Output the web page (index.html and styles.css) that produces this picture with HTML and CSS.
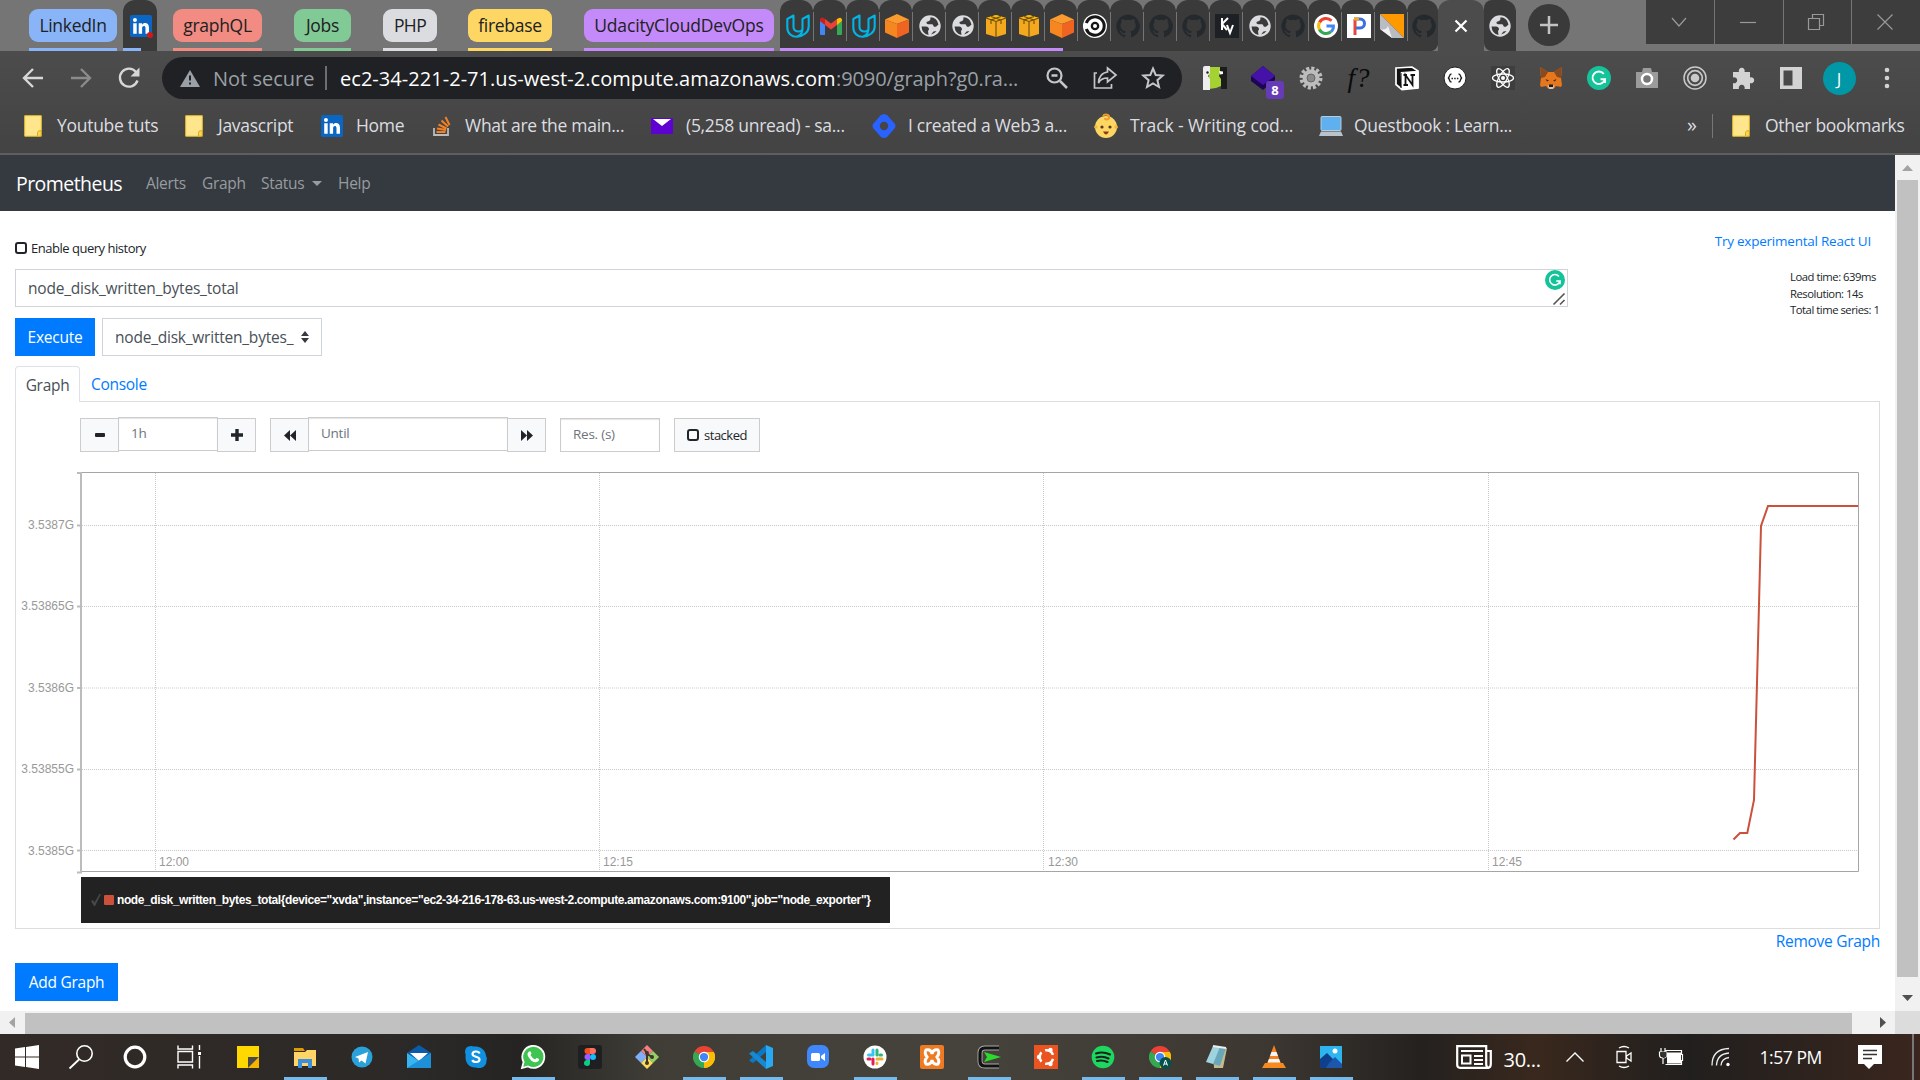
FILE: index.html
```html
<!DOCTYPE html>
<html lang="en">
<head>
<meta charset="utf-8">
<title>Prometheus Time Series Collection and Processing Server</title>
<link rel="stylesheet" href="styles.css">
</head>
<body>
<svg class="defs" aria-hidden="true">
  <symbol id="globe" viewBox="0 0 24 24"><circle cx="12" cy="12" r="10.700" fill="#dadce0"/><path d="M3.500 12.500h4.500q3 .3 3 3l-1 1.500.5 4Q4 19.500 3.500 12.500z" fill="#3a3a3a"/><path d="M12.500 3.300q6.500.2 8 7.200l-2.500 2.300h-2l-1.500-2.500h-4.500q-2-.2-1.500-2.300l2.500-1q1.800-1 1.500-3.700z" fill="#3a3a3a"/><path d="M13 20.500q3.500-.5 5.500-3.500l-3 .5z" fill="#3a3a3a"/></symbol>
  <symbol id="udacity" viewBox="0 0 24 24"><path d="M7.500 1.500L1.300 5v8.500c0 6 4.700 9.500 9.700 9.200 6.500-.5 11.700-4.500 11.700-10.200V1.500L16.500 5v9.500c0 4.500-9 4-9-1.500zM11 22.500c3.500-1 5.500-4 5.500-8" fill="none" stroke="#02b3e4" stroke-width="2.100" stroke-linejoin="round"/></symbol>
  <symbol id="gmail" viewBox="0 0 24 24"><path d="M1 7v13q0 1 1 1h4V10z" fill="#4285f4"/><path d="M18 10v11h4q1 0 1-1V7z" fill="#34a853"/><path d="M18 5v6l5-4V5.500q-1-3-4-1z" fill="#fbbc04"/><path d="M6 5v6l6 4.500 6-4.500V5l-6 4.500z" fill="#ea4335"/><path d="M1 5.500V7l5 4V5Q2 2 1 5.500z" fill="#c5221f"/></symbol>
  <symbol id="cube" viewBox="0 0 24 24"><path d="M12 0 24 5.500 12 10 0 5.500z" fill="#fb9a2e"/><path d="M0 5.500 12 10v14L0 18.500z" fill="#f6861f"/><path d="M24 5.500 12 10v14l12-5.500z" fill="#ee6420"/></symbol>
  <symbol id="box" viewBox="0 0 24 24"><path d="M12 1l10 3v16l-10 3L2 20V4z" fill="#f3a81e"/><path d="M12 1 22 4 12 7 2 4z" fill="#fbb900"/><path d="M2 4l10 3.500L22 4M12 8v15M7 2.500l10 3.500M17 2.500L7 6v4M17 6v4" fill="none" stroke="#6b4a12" stroke-width="1.100"/></symbol>
  <symbol id="circleci" viewBox="0 0 24 24"><circle cx="12" cy="12" r="12" fill="#fff"/><path d="M3.300 9a9.200 9.200 0 1 1 0 6" fill="none" stroke="#161616" stroke-width="3"/><path d="M0 12h9" stroke="#fff" stroke-width="3"/><circle cx="12" cy="12" r="4.300" fill="#161616"/><circle cx="12" cy="12" r="2" fill="#fff"/></symbol>
  <symbol id="github" viewBox="0 0 24 24"><path d="M12 .5a11.700 11.700 0 0 0-3.700 22.800c.6.100.8-.3.8-.6v-2.200c-3.300.7-4-1.400-4-1.400-.5-1.400-1.300-1.800-1.300-1.800-1.100-.7.100-.7.100-.7 1.200.1 1.800 1.200 1.800 1.200 1.100 1.800 2.800 1.300 3.500 1 .1-.8.400-1.300.8-1.600-2.700-.3-5.500-1.300-5.500-5.900 0-1.300.5-2.300 1.200-3.200-.1-.3-.5-1.500.1-3.100 0 0 1-.3 3.300 1.200a11 11 0 0 1 6 0c2.300-1.500 3.300-1.200 3.300-1.200.6 1.600.2 2.800.1 3.100.8.900 1.200 1.900 1.200 3.200 0 4.600-2.800 5.600-5.500 5.900.4.400.8 1.100.8 2.200v3.300c0 .3.200.7.800.6A11.700 11.700 0 0 0 12 .5z" fill="#24292e"/></symbol>
  <symbol id="linkedin" viewBox="0 0 24 24"><rect width="24" height="24" rx="2" fill="#0a66c2"/><path d="M3.500 9h3.800v11.500H3.500zM9.500 9h3.600v1.600c1.700-3 7.600-2.500 7.600 2.900v7h-3.800v-6.300c0-3.200-3.700-2.800-3.700 0v6.300H9.500z" fill="#fff"/><circle cx="5.400" cy="5.400" r="2.200" fill="#fff"/></symbol>
  <symbol id="folder" viewBox="0 0 18 22"><path d="M.7.700h16.600v15l-2 .3v5.200H.7z" fill="#ffe68c" stroke="#e9bf2c"/><path d="M13.500 21.300v-3.500q0-2 2-2h1.800v5.500z" fill="#fbd656" stroke="#d9ac20"/></symbol>
  <symbol id="chrome" viewBox="0 0 24 24"><path d="M12 12 1.600 6A12 12 0 0 1 22.400 6z" fill="#ea4335"/><path d="M12 12 22.400 6A12 12 0 0 1 12 24z" fill="#fbbc05"/><path d="M12 12v12A12 12 0 0 1 1.600 6z" fill="#34a853"/><path d="M12 6.500h10.700A12 12 0 0 1 12 24l5-9z" fill="#fbbc05"/><circle cx="12" cy="12" r="5.700" fill="#fff"/><circle cx="12" cy="12" r="4.500" fill="#4285f4"/></symbol>
  <symbol id="grammarly" viewBox="0 0 24 24"><circle cx="12" cy="12" r="12" fill="#15c39a"/><path d="M16.800 7.800A6.300 6.300 0 1 0 18 13.200h-4.500M18 13v4" fill="none" stroke="#fff" stroke-width="1.900"/></symbol>
</svg>

<header class="browser">
  <div class="tabstrip">
    <div class="group g-blue"><span class="pill">LinkedIn</span></div>
    <div class="tab-linked"><svg class="i22"><use href="#linkedin"/></svg><i class="reddot"></i></div>
    <div class="group g-red"><span class="pill">graphQL</span></div>
    <div class="group g-green"><span class="pill">Jobs</span></div>
    <div class="group g-grey"><span class="pill">PHP</span></div>
    <div class="group g-yellow"><span class="pill">firebase</span></div>
    <div class="group g-purple"><span class="pill">UdacityCloudDevOps</span></div>
    <div class="tabs">
      <div class="tab grouped"><svg class="i24"><use href="#udacity"/></svg></div>
      <div class="tab grouped"><svg class="i24"><use href="#gmail"/></svg></div>
      <div class="tab grouped"><svg class="i24"><use href="#udacity"/></svg></div>
      <div class="tab grouped"><svg class="i24"><use href="#cube"/></svg></div>
      <div class="tab grouped"><svg class="i24"><use href="#globe"/></svg></div>
      <div class="tab grouped"><svg class="i24"><use href="#globe"/></svg></div>
      <div class="tab grouped"><svg class="i24"><use href="#box"/></svg></div>
      <div class="tab grouped"><svg class="i24"><use href="#box"/></svg></div>
      <div class="tab half"><svg class="i24"><use href="#cube"/></svg></div>
      <div class="tab"><svg class="i24"><use href="#circleci"/></svg></div>
      <div class="tab"><svg class="i24"><use href="#github"/></svg></div>
      <div class="tab"><svg class="i24"><use href="#github"/></svg></div>
      <div class="tab"><svg class="i24"><use href="#github"/></svg></div>
      <div class="tab"><svg class="i24" viewBox="0 0 24 24"><rect width="24" height="24" fill="#1d2126"/><path d="M7 4v12M13 4l-6 6 5 6M12 11l3 8 3-8" fill="none" stroke="#fff" stroke-width="2"/></svg></div>
      <div class="tab"><svg class="i24"><use href="#globe"/></svg></div>
      <div class="tab"><svg class="i24"><use href="#github"/></svg></div>
      <div class="tab"><svg class="i24" viewBox="0 0 24 24"><circle cx="12" cy="12" r="12" fill="#fff"/><g fill="none" stroke-width="3"><path d="M17.500 6.800A7.500 7.500 0 0 0 5.500 8.500" stroke="#ea4335"/><path d="M5.500 8.300a8 8 0 0 0 0 7.400" stroke="#fbbc05"/><path d="M5.400 15.500a7.500 7.500 0 0 0 11.600 2.200" stroke="#34a853"/><path d="M17 17.700c2-1.700 2.600-3.500 2.400-5.700H12.500" stroke="#4285f4"/></g></svg></div>
      <div class="tab"><svg class="i24" viewBox="0 0 24 24"><rect width="24" height="24" fill="#fff"/><path d="M8 21V5" stroke="#e8453c" stroke-width="3"/><path d="M7 5h6c6 0 6 9 0 9H9" fill="none" stroke="#3c6fe0" stroke-width="3"/><path d="M7 5h5" stroke="#f5a623" stroke-width="3"/></svg></div>
      <div class="tab"><svg class="i24" viewBox="0 0 24 24"><path d="M0 0h24v24z" fill="#ff9900"/><path d="M0 0v15l12 9h12z" fill="#b9bcc2"/><path d="M0 15q6 2 8-3l4 12z" fill="#f1f1f1"/></svg></div>
      <div class="tab last"><svg class="i24"><use href="#github"/></svg></div>
    </div>
    <div class="tab-active"><svg width="14" height="14" viewBox="0 0 14 14"><path d="M1.500 1.500l11 11M12.500 1.500l-11 11" stroke="#fff" stroke-width="2.200"/></svg></div>
    <div class="tab-single"><svg class="i24"><use href="#globe"/></svg></div>
    <div class="newtab"><svg width="20" height="20" viewBox="0 0 20 20"><path d="M10 1v18M1 10h18" stroke="#c3c3c3" stroke-width="2.500"/></svg></div>
    <div class="winbtns">
      <div><svg width="18" height="18" viewBox="0 0 18 18"><path d="M2 5l7 8 7-8"/></svg></div>
      <div><svg width="18" height="18" viewBox="0 0 18 18"><path d="M1 9.500h16"/></svg></div>
      <div><svg width="18" height="18" viewBox="0 0 18 18"><path d="M1.500 5.500h11v11h-11zM5.500 5V1.500h11v11H13"/></svg></div>
      <div><svg width="18" height="18" viewBox="0 0 18 18"><path d="M1.500 1.500l15 15M16.500 1.500l-15 15"/></svg></div>
    </div>
  </div>

  <div class="toolbar">
    <div class="nav">
      <svg class="i24" viewBox="0 0 24 24"><path d="M22 12H3M12 3l-9 9 9 9" fill="none" stroke="#d6d7d9" stroke-width="2.400"/></svg>
      <svg class="i24" viewBox="0 0 24 24"><path d="M2 12h19M12 3l9 9-9 9" fill="none" stroke="#8b8b8b" stroke-width="2.400"/></svg>
      <svg class="i24" viewBox="0 0 24 24"><path d="M20.500 14.500A9 9 0 1 1 19 6" fill="none" stroke="#d6d7d9" stroke-width="2.400"/><path d="M22.500 1.500v9h-9z" fill="#d6d7d9"/></svg>
    </div>
    <div class="omnibox">
      <svg class="warn" width="20" height="17" viewBox="0 0 20 17"><path d="M10 0l10 17H0z" fill="#9aa0a6"/><path d="M10 5.500v5M10 12.500v2" stroke="#202124" stroke-width="2"/></svg>
      <span class="notsecure">Not secure</span>
      <span class="divider"></span>
      <span class="host">ec2-34-221-2-71.us-west-2.compute.amazonaws.com</span><span class="path">:9090/graph?g0.ra...</span>
      <span class="omni-icons">
        <svg class="i24" viewBox="0 0 24 24"><circle cx="9.500" cy="9.500" r="7" fill="none" stroke="#c4c7ca" stroke-width="2.200"/><path d="M15 15l7 7M6.500 9.500h6" stroke="#c4c7ca" stroke-width="2.500"/></svg>
        <svg class="i24" viewBox="0 0 24 24"><path d="M4 7H1.500v15h17v-4" fill="none" stroke="#c4c7ca" stroke-width="1.700"/><path d="M14.500 2l8.500 7-8.500 7v-4C10 12 7.500 13 5.500 17c0-6 3.500-10.500 9-11z" fill="none" stroke="#c4c7ca" stroke-width="1.700"/></svg>
        <svg class="i24" viewBox="0 0 24 24"><path d="M12 2.500l2.700 6.500 7 .6-5.300 4.600 1.600 6.800-6-3.600-6 3.600 1.600-6.800L2.300 9.600l7-.6z" fill="none" stroke="#c4c7ca" stroke-width="2"/></svg>
      </span>
    </div>
    <div class="extensions">
      <span><svg class="i24" viewBox="0 0 24 24"><path d="M6 1h12v19l-5 2-7 1z" fill="#a4d233"/><path d="M0 2q0-2 2-2h5v7l-2 3 2 3v11H0z" fill="#eee"/><path d="M17 1h7v22h-6V13l-2-3 1-3z" fill="#1c1c1c"/><path d="M16 5l4 .5V8l-3 .5z" fill="#fff"/><circle cx="4.500" cy="6.500" r="1.200" fill="#222"/></svg></span>
      <span class="has-badge"><svg class="i24" viewBox="0 0 24 24"><path d="M0 10 12 0l12 10v4L12 24 0 15z" fill="#1c0552"/><path d="M12 0l12 10-12 9L0 10z" fill="#4512a8"/></svg><b class="badge">8</b></span>
      <span><svg class="i24" viewBox="0 0 24 24"><circle cx="12" cy="12" r="9.500" fill="none" stroke="#bdbdbd" stroke-width="4" stroke-dasharray="3 1.970"/><circle cx="12" cy="12" r="6" fill="none" stroke="#bdbdbd" stroke-width="5"/><circle cx="12" cy="12" r="4" fill="#8a8a8a" stroke="#666"/></svg></span>
      <span class="fq">f?</span>
      <span><svg class="i24" viewBox="0 0 24 24"><path d="M1 2l16-1 6 4v17l-16 1.500-6-5z" fill="#111" stroke="#fff" stroke-width="1.700"/><path d="M6 6.500l17-1.200V22L7 23z" fill="#fff" stroke="#fff" stroke-width="1"/><path d="M6 7v15" stroke="#111"/><path d="M10.500 19V9l7 10V9M8.500 9h3.500M8.500 19H13M15.500 9H20" fill="none" stroke="#111" stroke-width="1.800"/></svg></span>
      <span><svg class="i24" viewBox="0 0 24 24"><circle cx="12" cy="12" r="11" fill="#fff" stroke="#222" stroke-width="1"/><path d="M8.500 8C5.500 8 7.500 11.500 5 12c2.500.5.5 4 3.500 4M15.500 8c3 0 1 3.500 3.500 4-2.500.5-.5 4-3.500 4" fill="none" stroke="#222" stroke-width="1.400"/><path d="M8.500 12.500h7" stroke="#222" stroke-width="1.500" stroke-dasharray="1.500 1.200"/></svg></span>
      <span><svg class="i24" viewBox="0 0 24 24"><rect width="24" height="24" fill="#3e3e3e"/><g fill="none" stroke="#fff" stroke-width="1.300"><ellipse cx="12" cy="12" rx="10.500" ry="4"/><ellipse cx="12" cy="12" rx="10.500" ry="4" transform="rotate(60 12 12)"/><ellipse cx="12" cy="12" rx="10.500" ry="4" transform="rotate(120 12 12)"/></g><circle cx="12" cy="12" r="2" fill="#fff"/></svg></span>
      <span><svg class="i24" viewBox="0 0 24 24"><path d="M1 1l8 5h6l8-5-1 11 1 7-1 2-5-1-2 2.500H9L7 20l-5 1-1-2 1-7z" fill="#e8761b"/><path d="M1 1l8 5-3 5-4 1zM23 1l-8 5 3 5 4 1z" fill="#8a4a20"/><path d="M6.500 13l3.500 1.500-2 1zM17.500 13L14 14.500l2 1z" fill="#27303c"/><path d="M8.500 19.500h7l-1.500 3.500h-4z" fill="#d8c5b4"/><path d="M10 18.500h4v2.500h-4z" fill="#1b1b1b"/></svg></span>
      <span><svg class="i24"><use href="#grammarly"/></svg></span>
      <span><svg class="i24" viewBox="0 0 24 24"><path d="M1 6h6l1-4h8l1 4h6v16H1z" fill="#9b9b9b"/><circle cx="12" cy="13" r="5" fill="#777" stroke="#fff" stroke-width="2.500"/></svg></span>
      <span><svg class="i24" viewBox="0 0 24 24"><g fill="none" stroke="#c9c9c9"><circle cx="12" cy="12" r="11" stroke-width="1.500"/><circle cx="12" cy="12" r="7.300" stroke-width="1.700"/></g><circle cx="12" cy="12" r="4.300" fill="#c9c9c9"/></svg></span>
      <span><svg class="i24" viewBox="0 0 24 24"><path d="M2 6h6a3 3 0 1 1 5.500 0H19v5.500a3 3 0 1 1 0 5.500v6h-5.500a3 3 0 1 0-5.500 0H2v-6a3 3 0 1 0 0-5.500z" fill="#d3d3d3"/></svg></span>
      <span><svg class="i24" viewBox="0 0 24 24"><path d="M1 1h22v22H1zM4.500 4.500v15h9v-15z" fill="#d3d3d3" fill-rule="evenodd"/></svg></span>
      <span class="avatar">J</span>
      <span><svg class="i24" viewBox="0 0 24 24"><g fill="#d3d3d3"><circle cx="12" cy="4" r="2.300"/><circle cx="12" cy="12" r="2.300"/><circle cx="12" cy="20" r="2.300"/></g></svg></span>
    </div>
  </div>

  <div class="bookmarks">
    <a class="bm b1"><svg class="fold"><use href="#folder"/></svg><span>Youtube tuts</span></a>
    <a class="bm b2"><svg class="fold"><use href="#folder"/></svg><span>Javascript</span></a>
    <a class="bm b3"><svg class="i22"><use href="#linkedin"/></svg><span>Home</span></a>
    <a class="bm b4"><svg width="18" height="20" viewBox="0 0 18 20"><path d="M1 12v7h14v-7" fill="none" stroke="#bcbbbb" stroke-width="1.800"/><path d="M3.500 16h9M4 12.500l9 1.500M5.500 8.500l8 4M8.500 4.500l6.500 6M12.500 1l4 8" stroke="#f48024" stroke-width="2"/></svg><span>What are the main...</span></a>
    <a class="bm b5"><svg width="22" height="16" viewBox="0 0 22 16"><rect width="22" height="16" rx="1" fill="#5f01d1"/><path d="M2 1h18l-9 7z" fill="#fff"/></svg><span>(5,258 unread) - sa...</span></a>
    <a class="bm b6"><svg class="i24" viewBox="0 0 24 24"><path d="M8.500 1.500q3.500-3 7 0l7 8q2 2.500 0 5l-7 8q-3.500 3-7 0l-7-8q-2-2.500 0-5z" fill="#2962ff"/><circle cx="12" cy="12" r="4.200" fill="#454545"/></svg><span>I created a Web3 a...</span></a>
    <a class="bm b7"><svg class="i24" viewBox="0 0 24 24"><circle cx="12" cy="13" r="11" fill="#fdd663"/><circle cx="1.800" cy="13" r="1.800" fill="#f2b63c"/><circle cx="22.200" cy="13" r="1.800" fill="#f2b63c"/><path d="M9 2c2-3 7-1 6 2-1 2-4 2-4 0" fill="none" stroke="#ef9b2d" stroke-width="2"/><circle cx="8" cy="13" r="1.600" fill="#5c3a1a"/><circle cx="16" cy="13" r="1.600" fill="#5c3a1a"/><path d="M9 17.500h6q-3 6-6 0z" fill="#8a3b1d"/></svg><span>Track - Writing cod...</span></a>
    <a class="bm b8"><svg width="24" height="20" viewBox="0 0 24 20"><rect x="2" y=".5" width="20" height="14" rx="1" fill="#5eb0ee" stroke="#b9cad8"/><path d="M2 15.500h20l2 4.500H0z" fill="#b9c3cc"/></svg><span>Questbook : Learn...</span></a>
    <span class="more">»</span>
    <span class="bm-div"></span>
    <a class="bm b9"><svg class="fold"><use href="#folder"/></svg><span>Other bookmarks</span></a>
  </div>
</header>

<main class="viewport">
  <div class="page">
    <nav class="navbar">
      <a class="brand">Prometheus</a>
      <a class="n1">Alerts</a><a class="n2">Graph</a><a class="n3">Status <i class="caret"></i></a><a class="n4">Help</a>
    </nav>
    <div class="content">
      <div class="history-row">
        <label class="history"><i class="check"></i><span>Enable query history</span></label>
        <a class="react">Try experimental React UI</a>
      </div>
      <div class="query-row">
        <div class="expr"><span>node_disk_written_bytes_total</span>
          <svg class="gram"><use href="#grammarly"/></svg>
          <svg class="grip" viewBox="0 0 12 12"><path d="M.500 11.500l11-11M7 11.500l4.500-4.500" stroke="#555" stroke-width="1.600"/></svg>
        </div>
        <div class="stats"><div>Load time: 639ms</div><div>Resolution: 14s</div><div>Total time series: 1</div></div>
      </div>
      <div class="exec-row">
        <button class="btn execute">Execute</button>
        <div class="metric"><span>node_disk_written_bytes_</span><svg width="8" height="12" viewBox="0 0 8 12"><path d="M4 0l4 5H0zM4 12l4-5H0z" fill="#343a40"/></svg></div>
      </div>
      <div class="ptabs"><a class="on">Graph</a><a class="off">Console</a></div>
      <section class="panel">
        <div class="controls">
          <span class="cbtn"><svg width="10" height="4"><rect width="10" height="4" rx="1" fill="#212529"/></svg></span><span class="cin w1">1h</span><span class="cbtn"><svg width="12" height="12" viewBox="0 0 12 12"><path d="M6 0v12M0 6h12" stroke="#212529" stroke-width="3.400"/></svg></span>
          <span class="cbtn gap"><svg width="12" height="11" viewBox="0 0 12 11"><path d="M6 0v11L0 5.500zM12 0v11L6 5.500z" fill="#212529"/></svg></span><span class="cin w2">Until</span><span class="cbtn"><svg width="12" height="11" viewBox="0 0 12 11"><path d="M0 0v11l6-5.500zM6 0v11l6-5.500z" fill="#212529"/></svg></span>
          <span class="cin res">Res. (s)</span>
          <span class="stacked"><i class="check"></i><span>stacked</span></span>
        </div>
        <svg class="chart" width="1865" height="408" viewBox="15 468 1865 408">
          <g fill="none" stroke="#c9c9c9" stroke-dasharray="1 1">
            <path d="M82 525.500H1858M82 606.500H1858M82 688H1858M82 769.500H1858M82 850.500H1858"/>
            <path d="M155.500 473V871M599.500 473V871M1043.500 473V871M1488.500 473V871"/>
          </g>
          <path d="M81 472.500H1858.500V871.500H81" fill="none" stroke="#a5a5a5"/>
          <path d="M81 472V873M77 473H82M77 872.500H82M77 525.500H81M77 606.500H81M77 688H81M77 769.500H81M77 850.500H81" fill="none" stroke="#bcbcbc" stroke-width="2"/>
          <path d="M1733.500 839.500l6.500-6.500h7.300l6.700-33 7-274 7-20h90" fill="none" stroke="#cb513a" stroke-width="2"/>
          <g class="ylab"><text x="74" y="529">3.5387G</text><text x="74" y="610">3.53865G</text><text x="74" y="692">3.5386G</text><text x="74" y="773">3.53855G</text><text x="74" y="855">3.5385G</text></g>
          <g class="xlab"><text x="159" y="866">12:00</text><text x="603" y="866">12:15</text><text x="1048" y="866">12:30</text><text x="1492" y="866">12:45</text></g>
        </svg>
        <div class="legend"><svg width="10" height="12" viewBox="0 0 10 12"><path d="M0 7l2-1 1.500 2.500L8.500 0H10L4 12H3z" fill="#484848"/></svg><i class="swatch"></i><span>node_disk_written_bytes_total{device="xvda",instance="ec2-34-216-178-63.us-west-2.compute.amazonaws.com:9100",job="node_exporter"}</span></div>
      </section>
      <div class="remove"><a>Remove Graph</a></div>
      <button class="btn add">Add Graph</button>
    </div>
  </div>
  <div class="vbar"><svg width="11" height="6" viewBox="0 0 11 6"><path d="M5.500 0L11 6H0z" fill="#a3a3a3"/></svg><i></i><svg width="11" height="6" viewBox="0 0 11 6"><path d="M0 0h11L5.500 6z" fill="#505050"/></svg></div>
  <div class="hbar"><svg width="6" height="11" viewBox="0 0 6 11"><path d="M6 0v11L0 5.500z" fill="#a3a3a3"/></svg><i></i><svg width="6" height="11" viewBox="0 0 6 11"><path d="M0 0v11l6-5.500z" fill="#505050"/></svg></div>
  <div class="corner"></div>
</main>

<footer class="taskbar">
  <div class="sys">
    <span><svg class="i24" viewBox="0 0 24 24"><path d="M0 3.500l10-1.400v9.300H0zM11 2L24 0v11.400H11zM0 12.500h10v9.400L0 20.500zM11 12.500h13V24l-13-2z" fill="#fff"/></svg></span>
    <span><svg class="i24" viewBox="0 0 24 24"><circle cx="15.500" cy="8.500" r="7.700" fill="none" stroke="#fff" stroke-width="1.600"/><path d="M10 14.500L.500 23.500" stroke="#fff" stroke-width="1.800"/></svg></span>
    <span><svg class="i24" viewBox="0 0 24 24"><circle cx="12" cy="12" r="9.800" fill="none" stroke="#fff" stroke-width="3.200"/></svg></span>
    <span><svg class="i24" viewBox="0 0 24 24"><path d="M1 .5V4h14.500V.5M1 23.500V20h14.500v3.500M1 6.500h14.500v10.500H1zM22.500 0v5M22.500 11v12.500" fill="none" stroke="#fff" stroke-width="1.400"/><rect x="21" y="7" width="3" height="3" fill="#fff"/></svg></span>
  </div>
  <div class="apps">
    <span><svg class="i24" viewBox="0 0 24 24"><path d="M1 1h22v11l-11 11H1z" fill="#ffd800"/><path d="M12 12h11L12 23z" fill="#4a4a4a"/><path d="M23 12v11H12z" fill="#f5b400"/></svg></span>
    <span class="run"><svg class="i24" viewBox="0 0 24 24"><path d="M1 3h9l2 3H1z" fill="#e09b00"/><path d="M1 7h11l2-2h9v16H1z" fill="#ffd567"/><path d="M5 23v-9h14v9h-4v-5H9v5z" fill="#3c8fdd"/></svg></span>
    <span><svg class="i24" viewBox="0 0 24 24"><circle cx="12" cy="12" r="10.500" fill="#2aa1da"/><path d="M5 12l13-5-2.500 11.500-4-3-2.500 2-.5-4z" fill="#fff"/></svg></span>
    <span><svg class="i24" viewBox="0 0 24 24"><path d="M0 8l12-8 12 8-12 9z" fill="#0a5ca8"/><path d="M3 8h18l-9 8z" fill="#fff"/><path d="M0 8l12 8 12-8v15H0z" fill="#36b5f0"/><path d="M24 8v15H0z" fill="#1e90d8"/></svg></span>
    <span><svg class="i24" viewBox="0 0 24 24"><path d="M7 1Q1 1 1 7q1 3 .5 5c0 7 5 11 10 10.500 6 2 11-1 11-7 1-4-.5-3-.5-5C21 3 14 1 10 1.500z" fill="#1190df"/><path d="M15.500 8.500c-1-3-7-2.500-7 .5 0 3.500 7 2 7 5.500 0 3-6 3.500-7.200.5" fill="none" stroke="#fff" stroke-width="2.200"/></svg></span>
    <span class="run"><svg class="i24" viewBox="0 0 24 24"><path d="M1 23l1.600-6A11 11 0 1 1 7 21.500z" fill="#3fc351" stroke="#fff" stroke-width="1.800"/><path d="M7.500 7q2-2 3 1.500l-1 1.500q2 3.500 4.500 4.500l1.500-1.500q4 1 2 3-5 4-10-4-2-3 0-5z" fill="#fff"/></svg></span>
    <span><svg class="i24" viewBox="0 0 24 24"><rect width="24" height="24" rx="3" fill="#1f1f22"/><path d="M12 3H9.500a3 3 0 0 0 0 6H12z" fill="#f24e1e"/><path d="M12 3h3a3 3 0 0 1 0 6h-3z" fill="#ff7262"/><path d="M12 9H9.500a3 3 0 0 0 0 6H12z" fill="#a259ff"/><circle cx="15" cy="12" r="3" fill="#1abcfe"/><path d="M12 15H9.500a3 3 0 1 0 2.500 3z" fill="#0acf83"/></svg></span>
    <span><svg class="i24" viewBox="0 0 24 24"><path d="M12 0l6 6-6 6-6-6z" fill="#f37f83"/><path d="M18 6l6 6-6 6-6-6z" fill="#94cf65"/><path d="M6 6l6 6-6 6-6-6z" fill="#80aef8"/><path d="M12 12l6 6-6 6-6-6z" fill="#fdd95c"/><path d="M9 4l3 4v10M12 9l5 3" fill="none" stroke="#3d362d" stroke-width="2"/><circle cx="12" cy="8" r="2" fill="#3d362d"/><circle cx="17" cy="12" r="2" fill="#3d362d"/><circle cx="12" cy="18" r="2" fill="#3d362d"/></svg></span>
    <span class="run"><svg class="i22"><use href="#chrome"/></svg></span>
    <span class="run"><svg class="i24" viewBox="0 0 24 24"><path d="M17 0l7 3v18l-7 3z" fill="#29a9f2"/><path d="M17 0v7L4 18l-4-2.500z" fill="#0a78c4"/><path d="M17 24v-7L4 6 0 8.500z" fill="#1689d4"/></svg></span>
    <span><svg class="i24" viewBox="0 0 24 24"><rect x="1" y="0" width="22" height="23" rx="7" fill="#4087fc"/><rect x="5" y="8" width="9" height="8" rx="1.500" fill="#fff"/><path d="M15 11l4-3v8l-4-3z" fill="#fff"/></svg></span>
    <span class="run"><svg class="i24" viewBox="0 0 24 24"><circle cx="12" cy="12" r="11.500" fill="#fff"/><g stroke-width="3" stroke-linecap="round"><path d="M10 5v5M5.500 10H8" stroke="#36c5f0"/><path d="M14 5v5M18.500 10H17" stroke="#2eb67d"/><path d="M14 14h5M14 18v.5" stroke="#ecb22e"/><path d="M10 14v5M5 14h2" stroke="#e01e5a"/></g></svg></span>
    <span><svg class="i24" viewBox="0 0 24 24"><rect width="24" height="24" rx="2" fill="#ee7b23"/><path d="M6 5q5-1 6 4 1-5 6-4 2 3-1 7 3 4 1 7-5 1-6-4-1 5-6 4-2-3 1-7-3-4-1-7z" fill="none" stroke="#fff" stroke-width="3"/></svg></span>
    <span class="run"><svg class="i24" viewBox="0 0 24 24"><path d="M22 3H8Q3 3 3 8v8q0 5 5 5h14" fill="none" stroke="#aaa" stroke-width="5"/><path d="M22 3H8Q3 3 3 8v8q0 5 5 5h14" fill="none" stroke="#111" stroke-width="3.200"/><path d="M7 7l17 5-17 5 3-5z" fill="#2bdb2b"/></svg></span>
    <span><svg class="i24" viewBox="0 0 24 24"><rect width="24" height="24" fill="#e95420"/><circle cx="12.500" cy="12" r="6.800" fill="none" stroke="#fff" stroke-width="2.500" stroke-dasharray="10 4.200" stroke-dashoffset="-2"/><circle cx="5" cy="12" r="2.200" fill="#fff"/><circle cx="16.500" cy="5" r="2.200" fill="#fff"/><circle cx="16.500" cy="19" r="2.200" fill="#fff"/></svg></span>
    <span class="run"><svg class="i24" viewBox="0 0 24 24"><circle cx="12" cy="12" r="11.300" fill="#1ed760"/><path d="M5 8.500q7-2.500 14 1M5.500 12.500q6.500-2 12 1M6 16q5-1.500 10.500 1" fill="none" stroke="#17231b" stroke-width="2.100" stroke-linecap="round"/></svg></span>
    <span class="run"><svg class="i24" viewBox="0 0 24 24"><use href="#chrome" x="1" y="1" width="22" height="22"/><circle cx="17.500" cy="18" r="6" fill="#05504a"/><path d="M15.500 20.500l2-5.500 2 5.500M16 19h3" fill="none" stroke="#fff" stroke-width="1"/></svg></span>
    <span class="run"><svg class="i24" viewBox="0 0 24 24"><path d="M8 1l14 2-4 20H9z" fill="#c7b98a"/><path d="M8 1l13 2-6 18-14-4z" fill="#9fd3df"/><path d="M15 2l6 1-6 18-7-2z" fill="#68a8b8"/><path d="M8 1l13 2" stroke="#eee" stroke-width="2"/></svg></span>
    <span class="run"><svg class="i24" viewBox="0 0 24 24"><path d="M12 0l7 19H5z" fill="#f58220"/><path d="M9.500 7h5l1.500 4H8zM7 14h10l1.500 3.500h-13z" fill="#f4f4f4"/><path d="M3 18h18l3 5H0z" fill="#f58a1f"/></svg></span>
    <span class="run"><svg class="i24" viewBox="0 0 24 24"><rect x="1" y="1" width="22" height="22" fill="#2cb5ee"/><path d="M1 14l7-6 15 15H1z" fill="#103f8c"/><path d="M10 18l6-6 7 7v4H7z" fill="#1d57ac"/><circle cx="16" cy="6" r="2.500" fill="#fff"/></svg></span>
  </div>
  <div class="tray">
    <svg width="36" height="24" viewBox="0 0 36 24"><path d="M1.200 1.200h29v18q0 3.600 3 3.600H4q-2.800 0-2.800-3zM30 6h4.800v13q0 3.800-3 3.800" fill="none" stroke="#fff" stroke-width="2.200"/><path d="M5 6h22M18 11h9M18 15h9M18 19h9" stroke="#fff" stroke-width="2"/><rect x="6" y="10.500" width="8.500" height="8" fill="none" stroke="#fff" stroke-width="2"/></svg>
    <span class="temp">30...</span>
    <svg class="t3" width="18" height="10" viewBox="0 0 18 10"><path d="M.500 9.500L9 1l8.500 8.500" fill="none" stroke="#fff" stroke-width="1.400"/></svg>
    <svg class="t4" width="18" height="22" viewBox="0 0 18 22"><path d="M4 2q5-3 10 0M4 20q5 3 10 0M2 5.500h9v11H2zM11.500 10l4.500-3v8l-4.500-3z" fill="none" stroke="#fff" stroke-width="1.300"/></svg>
    <svg class="t5" width="24" height="18" viewBox="0 0 24 18"><rect x="8" y="4.500" width="14" height="11" fill="#fff"/><path d="M6 2.500H22.500v4h1v6h-1v4H6.500M2 0v4M6 0v4M.500 4h7v3q0 3-3.500 3t-3.500-3zM4 10v6" fill="none" stroke="#fff" stroke-width="1.200"/><path d="M1 4h6.500v3q0 3-3.500 3" fill="#333"/></svg>
    <svg class="t6" width="20" height="20" viewBox="0 0 20 20"><path d="M1 18.500Q1 2 18 1.500M5.500 18.500Q6 7 18 6M10 18.500Q10.500 11.500 18 10.500" fill="none" stroke="#eee" stroke-width="1.300"/><circle cx="17" cy="17.500" r="1.700" fill="#fff"/></svg>
    <span class="clock">1:57 PM</span>
    <svg class="t8" width="24" height="24" viewBox="0 0 24 24"><path d="M0 0h24v19h-8l-5 5-5-5H0z" fill="#fff"/><path d="M5 5.500h14M5 9.500h14M5 13.500h9" stroke="#333" stroke-width="1.400"/></svg>
    <i class="peek"></i>
  </div>
</footer>
</body>
</html>
```

FILE: styles.css
```css
* { box-sizing: border-box; }
html, body { margin: 0; }
body {
  width: 1920px; height: 1080px; overflow: hidden;
  display: flex; flex-direction: column;
  font-family: "Open Sans", "Noto Sans", sans-serif;
  background: #fff; color: #212529;
}
.defs { display: none; }
svg { display: block; flex: none; overflow: visible; }
i { display: block; flex: none; }
.i24 { width: 24px; height: 24px; }
.i22 { width: 22px; height: 22px; }
span, a { white-space: nowrap; }

/* Browser window */
.browser { height: 155px; flex: none; background: linear-gradient(#4c4c4c 51px, #434343); border-bottom: 2px solid #5e5e5e; }
.tabstrip { height: 51px; display: flex; background: #757575; padding-left: 29px; }
.group { height: 51px; padding-top: 9px; margin-right: 32px; border-bottom: 3px solid; flex: none; }
.pill { display: flex; align-items: center; justify-content: center; height: 33px; border-radius: 9px; color: #202124; font-size: 17.500px; letter-spacing: -.3px; padding-bottom: 1px; }
.g-blue { width: 88px; margin-right: 6px; border-color: #8ab4f8; } .g-blue .pill { background: #8ab4f8; }
.g-red { width: 89px; border-color: #f28b82; } .g-red .pill { background: #f28b82; }
.g-green { width: 57px; border-color: #81c995; } .g-green .pill { background: #81c995; }
.g-grey { width: 54px; margin-right: 31px; border-color: #dadce0; } .g-grey .pill { background: #dadce0; letter-spacing: -.6px; }
.g-yellow { width: 84px; border-color: #fdd663; } .g-yellow .pill { background: #fdd663; }
.g-purple { width: 190px; margin-right: 6px; border-color: #c58af9; } .g-purple .pill { background: #c58af9; letter-spacing: -.15px; }
.tab-linked { width: 34px; height: 51px; margin-right: 16px; flex: none; position: relative; display: flex; justify-content: center; padding: 15px 0 0 2px; border-radius: 12px 12px 0 0; background: linear-gradient(#8ab4f8, #8ab4f8) 0 100% / 18px 3px no-repeat #3a3a3a; }
.reddot { position: absolute; left: 24px; top: 32px; width: 6px; height: 6px; border-radius: 50%; background: #d01919; }
.tabs { display: flex; width: 658px; flex: none; background: linear-gradient(transparent 12px, #3a3a3a 12px); border-radius: 0 0 8px 0; }
.tab { width: 33px; height: 51px; flex: none; background: #3a3a3a; border-radius: 12px 12px 0 0; display: flex; justify-content: center; padding: 14px 0 0 2px; }
.tab.grouped { border-bottom: 3px solid #c58af9; }
.tab.half { background: linear-gradient(#c58af9, #c58af9) 0 100% / 19px 3px no-repeat #3a3a3a; }
.tab + .tab { background-image: linear-gradient(#757575, #757575); background-size: 1px 29px; background-position: 0 12px; background-repeat: no-repeat; }
.tab + .tab.half { background-image: linear-gradient(#757575, #757575), linear-gradient(#c58af9, #c58af9); background-size: 1px 29px, 19px 3px; background-position: 0 12px, 0 100%; }
.tab.last { width: 31px; border-radius: 12px 12px 8px 0; }
.tab-active { width: 46px; height: 51px; flex: none; background: #4c4c4c; border-radius: 12px 12px 0 0; display: flex; justify-content: center; padding-top: 19px; }
.tab-single { width: 32px; height: 51px; flex: none; background: #3a3a3a; border-radius: 8px 12px 0 8px; display: flex; justify-content: center; padding-top: 14px; }
.newtab { width: 42px; height: 42px; margin: 4px 76px 0 12px; flex: none; border-radius: 50%; background: #3a3a3a; display: flex; align-items: center; justify-content: center; }
.winbtns { display: grid; grid-template-columns: repeat(4, 1fr); gap: 1px; height: 44px; flex: 1; }
.winbtns div { background: #3d3d3d; display: flex; align-items: center; justify-content: center; padding-right: 2px; }
.winbtns svg { fill: none; stroke: #999; stroke-width: 1.200; }

.toolbar { height: 54px; display: flex; align-items: center; }
.nav { width: 162px; display: flex; gap: 24px; padding-left: 21px; flex: none; }
.omnibox { width: 1020px; height: 42px; flex: none; border-radius: 21px; background: #202124; display: flex; align-items: center; padding-left: 18px; font-size: 20px; }
.notsecure { width: 112px; margin-left: 13px; color: #9aa0a6; }
.divider { width: 2px; height: 24px; background: #6b6e72; margin-right: 13px; }
.host { color: #fff; width: 496px; letter-spacing: .04px; }
.path { color: #9aa0a6; width: 209px; letter-spacing: -.1px; }
.omni-icons { display: flex; gap: 24px; }
.extensions { display: grid; grid-template-columns: repeat(15, 48px); margin-left: 9px; align-items: center; justify-items: center; }
.has-badge { position: relative; }
.badge { position: absolute; left: 15px; top: 15px; width: 18px; height: 18px; border-radius: 3px; background: #673ab7; color: #fff; font-size: 13px; line-height: 18px; text-align: center; }
.fq { font: italic 27px/30px "Liberation Serif", serif; color: #0b0b0b; letter-spacing: 1px; }
.avatar { width: 33px; height: 33px; border-radius: 50%; background: #0097a7; color: #fff; font-size: 17px; display: flex; align-items: center; justify-content: center; }

.bookmarks { height: 42px; display: flex; align-items: center; padding-left: 24px; color: #dcdde0; font-size: 17.500px; letter-spacing: -.28px; }
.bm { display: flex; align-items: center; flex: none; gap: 14px; }
.bm span { padding-bottom: 2px; }
.fold { width: 18px; height: 22px; }
.b1 { width: 161px; gap: 15px; } .b2 { width: 136px; gap: 15px; } .b3 { width: 112px; gap: 13px; } .b4 { width: 218px; }
.b5 { width: 221px; gap: 13px; } .b6 { width: 222px; gap: 12px; } .b7 { width: 225px; gap: 12px; letter-spacing: -.1px; } .b8 { width: 368px; gap: 11px; }
.more { width: 25px; font-size: 20px; padding-bottom: 4px; }
.bm-div { width: 1px; height: 24px; background: #777; margin-right: 19px; }
.b9 { gap: 15px; }

/* Viewport with scrollbars */
.viewport { height: 879px; flex: none; display: grid; grid-template: 856px 23px / 1895px 25px; }
.page { overflow: hidden; }
.vbar { background: #f1f1f1; display: flex; flex-direction: column; align-items: center; padding: 10px 0 0; grid-column: 2; grid-row: 1; }
.vbar i { width: 21px; height: 797px; margin: 9px 0 18px; background: #c1c1c1; }
.hbar { background: #f1f1f1; display: flex; align-items: center; padding-left: 9px; grid-column: 1; grid-row: 2; }
.hbar i { width: 1827px; height: 21px; margin: 2px 28px 0 10px; background: #c1c1c1; }
.corner { background: #dcdcdc; }

.navbar { height: 56px; background: #343a40; display: flex; align-items: center; padding: 0 0 0 16px; color: #999c9f; font-size: 15.500px; letter-spacing: -.3px; }
.brand { width: 130px; color: #fff; font-size: 19.500px; letter-spacing: -.55px; }
.n1 { width: 56px; } .n2 { width: 59px; } .n3 { width: 77px; display: flex; align-items: center; gap: 8px; }
.caret { border: 5px solid transparent; border-top-color: #999c9f; border-bottom: 0; }
.content { padding: 21px 15px 0; }
.history-row { height: 37px; display: flex; justify-content: space-between; font-size: 13px; letter-spacing: -.48px; }
.history { display: flex; align-items: center; gap: 4px; height: 32px; }
.check { width: 12px; height: 12px; border: 2px solid #212529; border-radius: 3px; }
.react { color: #007bff; font-size: 13.500px; margin: 0 9px 0 0; letter-spacing: -.23px; }
.query-row { height: 49px; display: flex; justify-content: space-between; }
.expr { position: relative; width: 1553px; height: 38px; border: 1px solid #ced4da; padding: 6px 12px; font-size: 15.500px; letter-spacing: -.2px; color: #495057; line-height: 24px; }
.gram { position: absolute; left: 1529px; top: 0; width: 20px; height: 20px; }
.grip { position: absolute; left: 1537px; top: 23px; width: 12px; height: 12px; }
.stats { width: 90px; font-size: 11.300px; line-height: 16.500px; letter-spacing: -.48px; white-space: nowrap; }
.exec-row { display: flex; gap: 7px; height: 48px; }
.btn { display: block; height: 38px; border: 0; padding: 0; background: #007bff; color: #fff; font: 15.500px "Open Sans", sans-serif; letter-spacing: -.25px; }
.execute { width: 80px; }
.metric { width: 220px; height: 38px; border: 1px solid #ced4da; display: flex; align-items: center; justify-content: space-between; padding: 0 12px; font-size: 15.500px; letter-spacing: -.22px; color: #495057; }
.ptabs { height: 36px; display: flex; font-size: 15.500px; letter-spacing: -.3px; line-height: 36px; position: relative; z-index: 1; }
.on { width: 65px; height: 36px; border: 1px solid #dee2e6; border-bottom: 0; background: #fff; border-radius: 4px 4px 0 0; text-align: center; color: #495057; }
.off { color: #007bff; padding-left: 11px; line-height: 37px; }
.panel { height: 528px; margin-top: -1px; border: 1px solid #ddd; padding: 16px 0 0; }
.controls { display: flex; padding-left: 64px; height: 50px; font-size: 13.500px; letter-spacing: -.25px; color: #6c757d; }
.cbtn { width: 39px; height: 34px; border: 1px solid #ccc; background: #f8f9fa; display: flex; align-items: center; justify-content: center; }
.cin { height: 34px; border: 1px solid #ccc; margin: -1px -1px 0; padding: 0 12px; line-height: 31px; box-shadow: inset 0 1px 1px #e5e5e5; }
.w1 { width: 100px; } .w2 { width: 200px; }
.gap { margin-left: 14px; }
.cin.res { width: 100px; margin: 0 14px; }
.stacked { width: 86px; height: 34px; border: 1px solid #ccc; background: #f8f9fa; display: flex; align-items: center; justify-content: center; gap: 5px; color: #212529; font-size: 13px; letter-spacing: -.5px; }
.chart { margin-left: -1px; }
.chart text { font-family: "Liberation Sans", Arial, sans-serif; font-size: 12px; fill: #999; }
.ylab { text-anchor: end; }
.legend { width: 809px; height: 46px; margin: 1px 0 0 65px; background: #222; color: #fff; display: flex; align-items: center; padding-left: 10px; font: bold 12px "Liberation Sans", Arial, sans-serif; letter-spacing: -.4px; }
.swatch { width: 10px; height: 10px; background: #cb513a; margin: 0 3px; border-radius: 1px; }
.remove { text-align: right; color: #007bff; height: 34px; font-size: 15.500px; line-height: 25px; letter-spacing: -.28px; }
.add { width: 103px; }

/* Taskbar */
.taskbar { height: 46px; flex: none; display: flex; background: linear-gradient(90deg, #322a26, #2b2927 22%, #252422 27%, #3f3d36 34%, #46433c 50%, #3c3731 66%, #24211f 74%, #39281d 80%, #211f1e 88%, #3a261e); }
.sys { display: grid; grid-template-columns: repeat(4, 54px); width: 219.500px; align-items: center; justify-items: center; flex: none; }
.apps { display: grid; grid-template-columns: repeat(20, 57px); flex: none; }
.apps > span { display: flex; align-items: center; justify-content: center; }
.run { background: linear-gradient(#76b9ed, #76b9ed) 50% 100% / 43px 3px no-repeat; }
.tray { display: flex; align-items: center; padding-left: 96px; color: #fff; flex: 1; }
.temp { width: 62px; margin-left: 12px; font-size: 20px; padding-top: 4px; letter-spacing: -.3px; }
.t4 { margin-left: 31px; } .t5 { margin-left: 26px; } .t6 { margin-left: 28px; }
.clock { width: 98px; margin-left: 29px; font-size: 17.500px; letter-spacing: -.45px; }
.peek { width: 2px; height: 46px; background: #777; margin-left: 30px; }
```
